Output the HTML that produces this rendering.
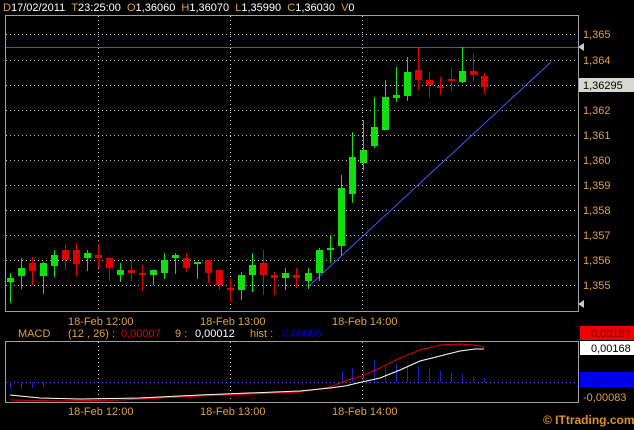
<!DOCTYPE html>
<html><head><style>
html,body{margin:0;padding:0;background:#000;width:634px;height:430px;overflow:hidden}
svg{display:block}
text{font-family:"Liberation Sans",sans-serif;font-size:11px}
.g{fill:#e0a040}
</style></head><body>
<svg width="634" height="430" viewBox="0 0 634 430">
<rect width="634" height="430" fill="#000"/>
<text x="3" y="11" fill="#fff"><tspan fill="#e0a040">D</tspan>17/02/2011 &#160;<tspan fill="#e0a040">T</tspan>23:25:00 &#160;<tspan fill="#e0a040">O</tspan>1,36060 &#160;<tspan fill="#e0a040">H</tspan>1,36070 &#160;<tspan fill="#e0a040">L</tspan>1,35990 &#160;<tspan fill="#e0a040">C</tspan>1,36030 &#160;<tspan fill="#e0a040">V</tspan>0</text>
<g stroke="#c8c8c8" stroke-width="1" stroke-dasharray="1,3">
<line x1="6" y1="34.5" x2="577" y2="34.5"/><line x1="6" y1="60.5" x2="577" y2="60.5"/><line x1="6" y1="85.5" x2="577" y2="85.5"/><line x1="6" y1="110.5" x2="577" y2="110.5"/><line x1="6" y1="135.5" x2="577" y2="135.5"/><line x1="6" y1="160.5" x2="577" y2="160.5"/><line x1="6" y1="185.5" x2="577" y2="185.5"/><line x1="6" y1="210.5" x2="577" y2="210.5"/><line x1="6" y1="235.5" x2="577" y2="235.5"/><line x1="6" y1="260.5" x2="577" y2="260.5"/><line x1="6" y1="285.5" x2="577" y2="285.5"/>
<line x1="98.5" y1="16" x2="98.5" y2="310"/><line x1="230.5" y1="16" x2="230.5" y2="310"/><line x1="362.5" y1="16" x2="362.5" y2="310"/>
<line x1="98.5" y1="342" x2="98.5" y2="401"/><line x1="230.5" y1="342" x2="230.5" y2="401"/><line x1="362.5" y1="342" x2="362.5" y2="401"/>
<line x1="6" y1="382.5" x2="577" y2="382.5" stroke="#6060ff"/>
</g>
<rect x="5.5" y="15.5" width="573" height="296" fill="none" stroke="#a0a0a0"/>
<rect x="5.5" y="341.5" width="573" height="61" fill="none" stroke="#a0a0a0"/>
<rect x="6" y="47" width="572" height="1" fill="#4848ff"/>
<polygon points="578,47 584,43 584,51" fill="#c8c8c8"/>
<line x1="309" y1="286" x2="551" y2="62" stroke="#5050ff"/>
<g id="c"></g>
<g class="g">
<text x="583" y="38">1,365</text><text x="583" y="64">1,364</text><text x="583" y="139">1,361</text><text x="583" y="164">1,360</text><text x="583" y="189">1,359</text><text x="583" y="214">1,358</text><text x="583" y="239">1,357</text><text x="583" y="264">1,356</text><text x="583" y="289">1,355</text><text x="583" y="114">1,362</text>
</g>
<rect x="579" y="78" width="55" height="14" fill="#d8d8d0"/>
<text x="583" y="89" fill="#000">1,36295</text>
<polygon points="578,304 584,300 584,308" fill="#c8c8c8"/>
<g class="g"><text x="68" y="325">18-Feb 12:00</text><text x="200" y="325">18-Feb 13:00</text><text x="332" y="325">18-Feb 14:00</text>
<text x="68" y="415">18-Feb 12:00</text><text x="200" y="415">18-Feb 13:00</text><text x="332" y="415">18-Feb 14:00</text></g>
<text x="18" y="337" fill="#e0a040">MACD</text>
<text x="68" y="337" fill="#e0a040">(12 , 26) :</text>
<text x="121" y="337" fill="#e00000">0,00007</text>
<text x="175" y="337" fill="#e0a040">9 :</text>
<text x="195" y="337" fill="#fff">0,00012</text>
<text x="250" y="337" fill="#e0a040">hist :</text>
<text x="282" y="337" fill="#0000d0">0,00005</text>
<rect x="580" y="326" width="54" height="14" fill="#f00000"/><text x="591" y="337" fill="#600">0,00187</text>
<rect x="580" y="341" width="54" height="14" fill="#fff"/><text x="591" y="352" fill="#000">0,00168</text>
<rect x="580" y="372" width="54" height="15" fill="#0000f0"/><text x="591" y="384" fill="#0000a0">0,00018</text>
<text x="583" y="401" class="g">-0,00083</text>
<g stroke="#2020d0" stroke-width="1">
<line x1="10.5" y1="382" x2="10.5" y2="388"/><line x1="21.5" y1="382" x2="21.5" y2="389"/><line x1="32.5" y1="382" x2="32.5" y2="388"/><line x1="43.5" y1="382" x2="43.5" y2="387"/>
<line x1="342.5" y1="371" x2="342.5" y2="382"/><line x1="352.5" y1="368" x2="352.5" y2="382"/><line x1="363.5" y1="365" x2="363.5" y2="382"/><line x1="374.5" y1="360" x2="374.5" y2="382"/><line x1="385.5" y1="365" x2="385.5" y2="382"/><line x1="396.5" y1="365" x2="396.5" y2="382"/><line x1="407.5" y1="366" x2="407.5" y2="382"/><line x1="418.5" y1="366" x2="418.5" y2="382"/><line x1="429.5" y1="368" x2="429.5" y2="382"/><line x1="440.5" y1="371" x2="440.5" y2="382"/><line x1="451.5" y1="373" x2="451.5" y2="382"/><line x1="462.5" y1="374" x2="462.5" y2="382"/><line x1="473.5" y1="376" x2="473.5" y2="382"/><line x1="484.5" y1="378" x2="484.5" y2="382"/>
</g>
<polyline fill="none" stroke="#e00000" stroke-width="1" points="10,400 60,401 120,400 160,398 200,396 300,392 330,387 345,381 362,376 380,368 400,358 420,350 440,345 460,344 475,345 484,347"/>
<polyline fill="none" stroke="#fff" stroke-width="1" points="10,395 40,398 80,399 140,398 200,395 300,391 330,388 345,386 362,382 380,378 400,370 420,361 440,356 460,351 475,349 484,349"/>
<text x="543" y="424" fill="#e09020" style="font-weight:bold;font-size:12px">© ITtrading.com</text>
</svg>
<script>
var d=[[10,'g',278,282,273,303],[21,'g',268,276,258,289],[32,'r',263,271,257,285],[43,'g',263,276,262,294],[54,'g',255,266,250,277],[65,'r',250,260,244,270],[76,'r',250,264,243,276],[87,'g',253,258,250,271],[98,'r',255,258,244,268],[109,'r',258,268,257,281],[120,'g',270,275,263,282],[131,'r',270,273,260,281],[142,'r',273,275,265,291],[153,'g',270,275,270,285],[164,'g',260,273,253,279],[175,'g',255,258,253,274],[186,'r',258,268,253,272],[197,'g',262,264,262,279],[208,'r',260,273,260,283],[219,'r',270,285,270,290],[230,'r',288,289,278,302],[241,'g',275,290,272,300],[252,'g',265,275,253,292],[263,'r',263,275,250,295],[274,'r',275,278,272,295],[285,'g',273,278,268,290],[296,'r',275,278,268,288],[308,'g',273,281,268,289],[319,'g',250,273,248,281],[330,'g',248,250,235,263],[341,'g',188,246,175,256],[352,'g',157,194,132,203],[363,'g',150,163,120,170],[374,'g',127,146,97,148],[385,'g',97,130,80,130],[396,'g',95,98,67,102],[407,'g',72,96,57,101],[418,'r',70,80,47,90],[429,'r',80,85,72,98],[440,'r',86,88,77,95],[451,'r',79,81,68,91],[462,'g',71,82,47,83],[473,'r',71,75,54,82],[484,'r',76,87,73,94]];
var s='';d.forEach(function(c){var col=c[1]=='g'?'#10e010':'#e00000';s+='<line x1="'+(c[0]+.5)+'" y1="'+c[4]+'" x2="'+(c[0]+.5)+'" y2="'+c[5]+'" stroke="'+col+'"/><rect x="'+(c[0]-3)+'" y="'+c[2]+'" width="7" height="'+Math.max(2,c[3]-c[2])+'" fill="'+col+'"/>';});
document.getElementById('c').innerHTML=s;
</script>
</body></html>
